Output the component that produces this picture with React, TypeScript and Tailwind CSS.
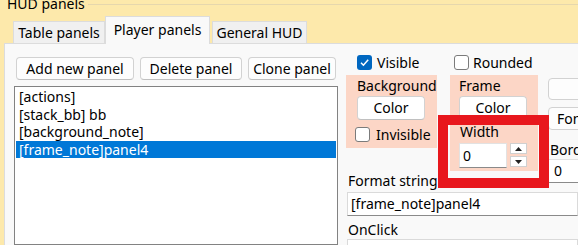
const FONT = "font-['Noto_Sans',sans-serif]";

function Checkbox({ checked }: { checked?: boolean }) {
  if (checked) {
    return (
      <span className="w-[15px] h-[15px] rounded-[3px] bg-[#0067c0] flex items-center justify-center shrink-0">
        <svg width="11" height="11" viewBox="0 0 11 11">
          <path d="M2 5.8 L4.4 8.2 L9.2 2.8" fill="none" stroke="#fff" strokeWidth="1.5" />
        </svg>
      </span>
    );
  }
  return <span className="w-[15px] h-[15px] rounded-[3px] bg-white border border-[#7b7b7b] shrink-0" />;
}

function Button({ label, className }: { label: string; className: string }) {
  return (
    <div
      className={`h-[23px] rounded-[4px] bg-[#fdfdfd] border border-[#d2d2d2] border-b-[#c0c0c0] flex items-center justify-center leading-none ${className}`}
    >
      {label}
    </div>
  );
}

const items = ["[actions]", "[stack_bb] bb", "[background_note]", "[frame_note]panel4"];

export default function App() {
  return (
    <div className={`w-[578px] h-[245px] overflow-hidden bg-[#fde9ab] relative flex flex-col text-[14px] text-black ${FONT}`}>
      {/* group title */}
      <div className="h-[16px] flex items-start pl-[7px] shrink-0">
        <span className="-mt-[5px] leading-[17px]">HUD panels</span>
        <div className="flex-1 mt-[4px] ml-[3px] border-t border-[#e6d7ad]" />
      </div>

      {/* tabs */}
      <div className="h-[27px] flex items-end pl-[13px] shrink-0">
        <div className="w-[92px] h-[22px] bg-[#f0f0f0] border border-b-0 border-[#dcdcdc] flex items-center justify-center leading-none pt-[1px]">
          Table panels
        </div>
        <div className="w-[105px] h-[28px] -mb-px bg-[#f9f9f9] border border-b-0 border-[#dcdcdc] relative z-10 flex items-center justify-center leading-none pb-[2px]">
          Player panels
        </div>
        <div className="w-[95px] h-[22px] ml-[2px] bg-[#f0f0f0] border border-b-0 border-[#dcdcdc] flex items-center justify-center leading-none pt-[1px]">
          General HUD
        </div>
      </div>

      {/* tab page */}
      <div className="flex-1 ml-[4px] bg-[#f9f9f9] border-t border-l border-[#dcdcdc] flex pt-[11px] pl-[9px] min-h-0">
        {/* left column */}
        <div className="w-[324px] shrink-0 flex flex-col">
          <div className="mt-[2px] pl-[2px] flex gap-[6px]">
            <Button label="Add new panel" className="w-[118px]" />
            <Button label="Delete panel" className="w-[102px]" />
            <Button label="Clone panel" className="w-[88px]" />
          </div>
          <div className="mt-[6px] flex-1 bg-white border border-[#828282] pt-[1px]">
            {items.map((t, i) => (
              <div
                key={t}
                className={`leading-[17.6px] pl-[3px] mx-[1px] ${i === 3 ? "bg-[#0078d7] text-white" : ""}`}
              >
                {t}
              </div>
            ))}
          </div>
        </div>

        {/* right section */}
        <div className="ml-[8px] flex-1 flex flex-col min-w-0">
          <div className="h-[15px] flex items-center pl-[11px]">
            <div className="w-[97px] flex items-center">
              <Checkbox checked />
              <span className="ml-[5px] leading-none">Visible</span>
            </div>
            <div className="flex items-center">
              <Checkbox />
              <span className="ml-[4px] leading-none">Rounded</span>
            </div>
          </div>

          <div className="mt-[5px] h-[96px] flex items-start shrink-0">
            {/* background group */}
            <div className="w-[91px] h-[73px] bg-[#fcd6c6] pl-[11px] pt-[2px] shrink-0">
              <div className="leading-[17px]">Background</div>
              <Button label="Color" className="mt-[2px] w-[68px] h-[24px] bg-white" />
              <div className="mt-[7px] -ml-[2px] flex items-center">
                <Checkbox />
                <span className="ml-[6px] leading-none">Invisible</span>
              </div>
            </div>

            {/* frame group */}
            <div className="ml-[13px] w-[88px] h-[96px] bg-[#fcd6c6] pl-[9px] pt-[2px] shrink-0">
              <div className="leading-[17px]">Frame</div>
              <Button label="Color" className="mt-[2px] w-[68px] h-[24px] bg-white" />
              <div className="mt-[3px] ml-[1px] leading-[17px]">Width</div>
              <div className="mt-[3px] flex items-start">
                <div className="w-[48px] h-[25px] bg-white border border-[#e2e2e2] border-b-[#8a8a8a] flex items-center pl-[3px] leading-none">
                  0
                </div>
                <div className="ml-[3px] w-[17px] flex flex-col gap-[2px]">
                  <div className="h-[11px] bg-white border border-[#d0d0d0] flex items-center justify-center">
                    <svg width="7" height="4" viewBox="0 0 7 4"><path d="M0 4 L3.5 0 L7 4 Z" fill="#222" /></svg>
                  </div>
                  <div className="h-[11px] bg-white border border-[#d0d0d0] flex items-center justify-center">
                    <svg width="7" height="4" viewBox="0 0 7 4"><path d="M0 0 L3.5 4 L7 0 Z" fill="#222" /></svg>
                  </div>
                </div>
              </div>
            </div>

            {/* right column, cut off at the window edge */}
            <div className="ml-[10px] w-[60px] shrink-0 flex flex-col">
              <div className="mt-[3px] h-[22px] rounded-[4px] bg-[#fdfdfd] border border-[#d2d2d2]" />
              <div className="mt-[7px] h-[23px] rounded-[4px] bg-[#fdfdfd] border border-[#d2d2d2] flex items-center pl-[8px] leading-none">
                Font
              </div>
              <div className="mt-[11px] pl-[2px] leading-[17px]">Border</div>
              <div className="mt-[1px] h-[24px] bg-white border border-[#e2e2e2] border-b-[#8a8a8a] flex items-center pl-[5px] leading-none">
                0
              </div>
            </div>
          </div>

          <div className="mt-[1px] pl-[2px] leading-[17px]">Format string</div>
          <div className="mt-[3px] ml-[1px] h-[24px] bg-white border border-[#dadada] border-b-[#8a8a8a] flex items-center pl-[3px] leading-none shrink-0">
            [frame_note]panel4
          </div>
          <div className="mt-[5px] pl-[2px] leading-[17px]">OnClick</div>
          <div className="mt-[1px] ml-[1px] h-[24px] bg-white border border-[#dadada] shrink-0" />
        </div>
      </div>

      {/* highlight annotation */}
      <div className="absolute left-[438px] top-[115px] w-[111px] h-[73px] border-[10px] border-[#e8171d]" />
    </div>
  );
}
